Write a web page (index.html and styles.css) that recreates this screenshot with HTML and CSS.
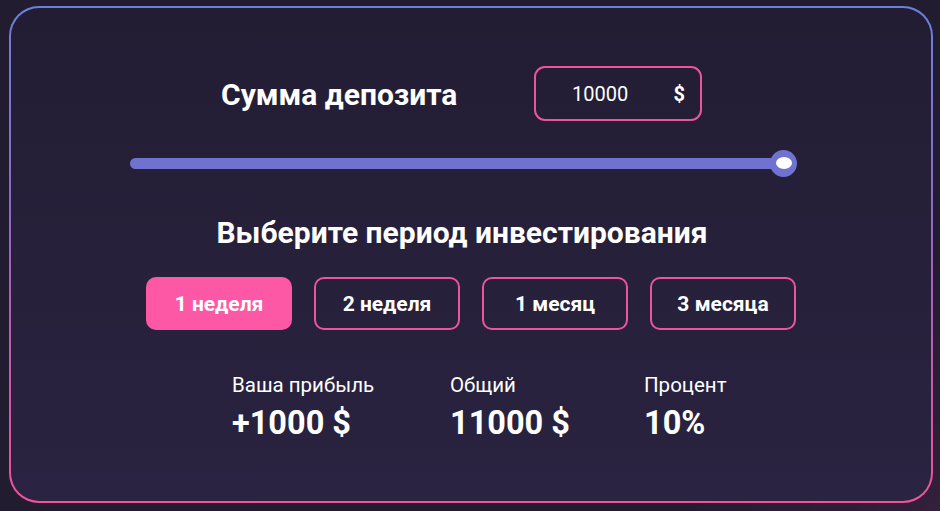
FILE: index.html
```html
<!DOCTYPE html>
<html lang="ru">
<head>
<meta charset="utf-8">
<title>Калькулятор депозита</title>
<link rel="stylesheet" href="styles.css">
</head>
<body>
<div class="page">
  <section class="card">
    <div class="amount-row">
      <h2 class="amount-title">Сумма депозита</h2>
      <div class="amount-input">
        <span class="amount-value">10000</span>
        <span class="amount-cur">$</span>
      </div>
    </div>
    <div class="slider">
      <div class="slider-track"></div>
      <div class="slider-thumb"><span class="slider-dot"></span></div>
    </div>
    <h2 class="period-title">Выберите период инвестирования</h2>
    <div class="periods">
      <button class="period active">1 неделя</button>
      <button class="period">2 неделя</button>
      <button class="period">1 месяц</button>
      <button class="period">3 месяца</button>
    </div>
    <div class="stats">
      <div class="stat stat-profit">
        <div class="stat-label">Ваша прибыль</div>
        <div class="stat-value">+1000 $</div>
      </div>
      <div class="stat stat-total">
        <div class="stat-label">Общий</div>
        <div class="stat-value">11000 $</div>
      </div>
      <div class="stat stat-percent">
        <div class="stat-label">Процент</div>
        <div class="stat-value">10%</div>
      </div>
    </div>
  </section>
</div>
</body>
</html>
```

FILE: styles.css
```css
* { box-sizing: border-box; }
html, body {
  margin: 0;
  height: 100%;
}
body {
  background: radial-gradient(circle at 100% 100%, #33203a 0%, rgba(34,28,50,0) 25%), #221c31;
  font-family: Roboto, "Noto Sans", "Liberation Sans", sans-serif;
  color: #ffffff;
}
.page {
  padding: 6px 7px 8px 9px;
}
.card {
  width: 924px;
  height: 497px;
  border: 2px solid transparent;
  border-radius: 30px;
  background:
    linear-gradient(180deg, #221d33 0%, #2a2341 100%) padding-box,
    linear-gradient(180deg, #6a80d9 0%, #8e68cc 40%, #d058a8 80%, #f4519b 100%) border-box;
  display: flex;
  flex-direction: column;
  align-items: flex-start;
}
.amount-row {
  margin: 58px 0 0 210px;
  display: flex;
  align-items: center;
}
.amount-title {
  margin: 0;
  padding-top: 3px;
  font-size: 30px;
  font-weight: 700;
  line-height: 36px;
  width: 313px;
  white-space: nowrap;
}
.amount-input {
  width: 168px;
  height: 55px;
  border: 2px solid #ea559e;
  border-radius: 11px;
  display: flex;
  align-items: center;
  justify-content: space-between;
  padding: 0 15px 0 36px;
}
.amount-value {
  font-size: 20px;
  font-weight: 400;
}
.amount-cur {
  font-size: 20px;
  font-weight: 700;
}
.slider {
  margin: 28px 0 0 119px;
  width: 667px;
  height: 28px;
  display: flex;
  align-items: center;
}
.slider-track {
  flex: 1;
  height: 11px;
  background: #6f72cf;
  border-radius: 6px;
  margin-right: -12px;
}
.slider-thumb {
  width: 27px;
  height: 27px;
  border-radius: 50%;
  background: #6f72cf;
  display: flex;
  align-items: center;
  justify-content: center;
}
.slider-dot {
  width: 16px;
  height: 12px;
  border-radius: 50%;
  background: #ffffff;
}
.period-title {
  margin: 38px 0 0 184px;
  width: 534px;
  text-align: center;
  font-size: 30px;
  font-weight: 700;
  line-height: 36px;
  white-space: nowrap;
}
.periods {
  margin: 26px 0 0 135px;
  display: flex;
  gap: 22px;
}
.period {
  width: 146px;
  height: 53px;
  border: 2px solid #ea559e;
  border-radius: 10px;
  background: transparent;
  color: #ffffff;
  font-family: Roboto, "Noto Sans", "Liberation Sans", sans-serif;
  font-size: 21px;
  font-weight: 700;
  padding: 0;
}
.period.active {
  background: #fd58a6;
  border-color: #fd58a6;
}
.stats {
  margin: 43px 0 0 221px;
  display: flex;
}
.stat-profit { width: 218px; }
.stat-total { width: 194px; }
.stat-label {
  font-size: 20.5px;
  font-weight: 400;
  line-height: 24px;
}
.stat-value {
  margin-top: 6px;
  font-size: 32.5px;
  font-weight: 700;
  line-height: 40px;
}
```
